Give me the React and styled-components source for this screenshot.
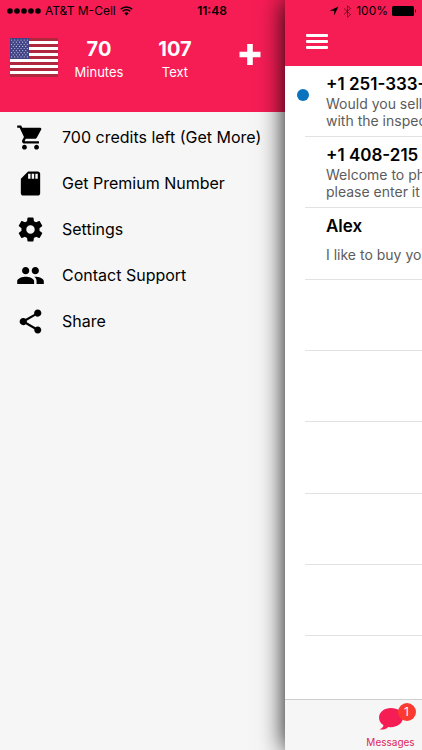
import React from 'react'
import styled, { createGlobalStyle } from 'styled-components'
import { MdShoppingCart, MdSdCard, MdGroup, MdShare } from 'react-icons/md'

const GlobalStyle = createGlobalStyle`
    * {
        box-sizing: border-box;
    }
    body {
        margin: 0;
        font-family: Inter, "Liberation Sans", sans-serif;
        color: #000;
        background-color: #f6f6f6;
    }
    button {
        margin: 0;
        padding: 0;
        border: none;
        background: none;
        font: inherit;
        color: inherit;
        cursor: pointer;
    }
    ul {
        margin: 0;
        padding: 0;
        list-style: none;
    }
`

const Shell = styled.div`
    position: relative;
    display: grid;
    grid-template-columns: minmax(0, 1fr) 137px;
    min-height: 100vh;
    overflow: hidden;
`

/* status bar, lies over both the drawer and the page */
const StatusBar = styled.div`
    position: absolute;
    top: 0;
    left: 0;
    right: 0;
    z-index: 2;
    display: grid;
    grid-template-columns: 1fr auto 1fr;
    align-items: center;
    height: 22px;
    padding: 0 5px 0 7px;
    font-size: 12px;
    line-height: 16px;
    pointer-events: none;
`

const StatusGroup = styled.div`
    display: flex;
    align-items: center;
    justify-content: ${({ $end }) => ($end ? 'flex-end' : 'flex-start')};
    gap: 4px;
    white-space: nowrap;
`

const Clock = styled.div`
    font-weight: 600;
`

const Drawer = styled.nav`
    background-color: #f6f6f6;
`

const DrawerHeader = styled.header`
    display: flex;
    align-items: flex-start;
    height: 112px;
    padding: 38px 24px 0 10px;
    background-color: #f61d55;
    color: #fff;
`

const Stats = styled.div`
    display: flex;
    margin: 0 auto 0 3px;
`

const Stat = styled.div`
    width: 76px;
    text-align: center;
`

const StatValue = styled.div`
    font-size: 20px;
    line-height: 22px;
    font-weight: 700;
`

const StatLabel = styled.div`
    margin-top: 4px;
    font-size: 13px;
    line-height: 16px;
`

const AddButton = styled.button`
    display: flex;
    padding-top: 6px;
`

const Menu = styled.ul`
    display: flex;
    flex-direction: column;
    padding-top: 2px;
`

const MenuButton = styled.button`
    display: flex;
    align-items: center;
    gap: 17px;
    width: 100%;
    height: 46px;
    padding-left: 16px;
    font-size: 16px;
    line-height: 20px;
    text-align: left;
    white-space: nowrap;
    svg {
        flex: none;
        width: 29px;
        height: 29px;
    }
`

const Page = styled.main`
    position: relative;
    z-index: 1;
    display: flex;
    flex-direction: column;
    width: 100vw;
    background-color: #fff;
    box-shadow: 0 0 24px rgba(0, 0, 0, 0.95);
`

const PageHeader = styled.header`
    height: 66px;
    padding: 33px 0 0 21px;
    background-color: #f61d55;
`

const MenuToggle = styled.button`
    display: flex;
`

const MessageList = styled.ul`
    display: grid;
    flex: 1;
    grid-auto-rows: 71px 71px 72px;
`

const MessageRow = styled.li`
    display: grid;
    grid-template-columns: 20px 1fr;
`

const Unread = styled.span`
    width: 12px;
    height: 12px;
    margin: 23px 0 0 12px;
    border-radius: 50%;
    background-color: #0a73bd;
`

const MessageBody = styled.div`
    grid-column: 2;
    padding: 8px 0 0 21px;
    border-bottom: 1px solid #e2e2e2;
    white-space: nowrap;
`

const Sender = styled.div`
    font-size: 17px;
    line-height: 21px;
    font-weight: 600;
`

const Preview = styled.div`
    padding-top: ${({ $single }) => ($single ? '9px' : '0')};
    font-size: 14px;
    line-height: 17px;
    color: #5c5c5c;
`

const TabBar = styled.footer`
    display: flex;
    height: 51px;
    border-top: 1px solid #cfcfcf;
    background-color: #f6f6f6;
`

const Tab = styled.a`
    display: flex;
    flex-direction: column;
    align-items: center;
    width: 50%;
    padding-top: 7px;
    font-size: 10px;
    line-height: 14px;
    color: #e0265a;
    text-decoration: none;
`

const TabIcon = styled.span`
    position: relative;
    display: flex;
    height: 28px;
`

const Badge = styled.span`
    position: absolute;
    top: -4px;
    right: -12px;
    width: 18px;
    height: 18px;
    border-radius: 50%;
    background-color: #fb3b30;
    color: #fff;
    font-size: 12px;
    line-height: 18px;
    text-align: center;
`

const Gear = () => (
    <svg viewBox="0 0 24 24">
        <path d="M19.43 12.98c.04-.32.07-.64.07-.98s-.03-.66-.07-.98l2.11-1.65c.19-.15.24-.42.12-.64l-2-3.46c-.12-.22-.39-.3-.61-.22l-2.49 1c-.52-.4-1.08-.73-1.69-.98l-.38-2.65C14.46 2.18 14.25 2 14 2h-4c-.25 0-.46.18-.49.42l-.38 2.65c-.61.25-1.17.59-1.69.98l-2.49-1c-.23-.09-.49 0-.61.22l-2 3.46c-.13.22-.07.49.12.64l2.11 1.65c-.04.32-.07.65-.07.98s.03.66.07.98l-2.11 1.65c-.19.15-.24.42-.12.64l2 3.46c.12.22.39.3.61.22l2.49-1c.52.4 1.08.73 1.69.98l.38 2.65c.03.24.24.42.49.42h4c.25 0 .46-.18.49-.42l.38-2.65c.61-.25 1.17-.59 1.69-.98l2.49 1c.23.09.49 0 .61-.22l2-3.46c.12-.22.07-.49-.12-.64l-2.11-1.65zM12 15.5c-1.93 0-3.5-1.57-3.5-3.5s1.57-3.5 3.5-3.5 3.5 1.57 3.5 3.5-1.57 3.5-3.5 3.5z" />
    </svg>
)

const menuItems = [
    { icon: MdShoppingCart, label: '700 credits left (Get More)' },
    { icon: MdSdCard, label: 'Get Premium Number' },
    { icon: Gear, label: 'Settings' },
    { icon: MdGroup, label: 'Contact Support' },
    { icon: MdShare, label: 'Share' },
]

const messages = [
    { sender: '+1 251-333-', lines: ['Would you sell', 'with the inspec'], unread: true },
    { sender: '+1 408-215', lines: ['Welcome to ph', 'please enter it'] },
    { sender: 'Alex', lines: ['I like to buy you'] },
    {}, {}, {}, {}, {},
]

const SignalDots = () => (
    <svg width="34" height="6" viewBox="0 0 34 6">
        {[3, 10, 17, 24, 31].map((x) => (
            <circle key={x} cx={x} cy="3" r="2.8" />
        ))}
    </svg>
)

const Wifi = () => (
    <svg width="13" height="10" viewBox="0 0 13 10" fill="none" stroke="#000" strokeWidth="1.5">
        <path d="M0.7 3.3a8.3 8.3 0 0 1 11.6 0" />
        <path d="M2.7 5.4a5.4 5.4 0 0 1 7.6 0" />
        <path d="M6.5 9.6L4.3 7.3a3.2 3.2 0 0 1 4.4 0z" fill="#000" stroke="none" />
    </svg>
)

const LocationArrow = () => (
    <svg width="10" height="10" viewBox="0 0 10 10">
        <path d="M9.5 0.5L5.2 9.5V4.8H0.5z" />
    </svg>
)

const Bluetooth = () => (
    <svg width="9" height="13" viewBox="0 0 9 13" fill="none" stroke="#000" strokeOpacity="0.5">
        <path d="M1 3.5l6.5 6L4.5 12.2V0.8L7.5 3.5L1 9.5" />
    </svg>
)

const Battery = () => (
    <svg width="25" height="10" viewBox="0 0 25 10">
        <rect width="22" height="10" rx="1.5" />
        <path d="M23 3.2a2 2 0 0 1 0 3.6z" />
    </svg>
)

const Flag = () => (
    <svg width="48" height="39" viewBox="0 0 48 39">
        <rect width="48" height="39" fill="#fff" />
        {[0, 2, 4, 6, 8, 10, 12].map((i) => (
            <rect key={i} y={i * 3} width="48" height="3" fill="#b0283e" />
        ))}
        <rect width="19" height="21" fill="#3f4284" />
        {[0, 1, 2, 3, 4, 5, 6, 7, 8].map((row) =>
            (row % 2 ? [0, 1, 2, 3, 4] : [0, 1, 2, 3, 4, 5]).map((col) => (
                <circle
                    key={`${row}-${col}`}
                    cx={1.6 + col * 3.15 + (row % 2 ? 1.6 : 0)}
                    cy={2.1 + row * 2.1}
                    r="0.6"
                    fill="#c9cbe4"
                />
            ))
        )}
    </svg>
)

const App = () => {
    return (
        <>
            <GlobalStyle />
            <Shell>
                <StatusBar>
                    <StatusGroup>
                        <SignalDots />
                        <span>AT&amp;T M-Cell</span>
                        <Wifi />
                    </StatusGroup>
                    <Clock>11:48</Clock>
                    <StatusGroup $end>
                        <LocationArrow />
                        <Bluetooth />
                        <span>100%</span>
                        <Battery />
                    </StatusGroup>
                </StatusBar>

                <Drawer>
                    <DrawerHeader>
                        <Flag />
                        <Stats>
                            <Stat>
                                <StatValue>70</StatValue>
                                <StatLabel>Minutes</StatLabel>
                            </Stat>
                            <Stat>
                                <StatValue>107</StatValue>
                                <StatLabel>Text</StatLabel>
                            </Stat>
                        </Stats>
                        <AddButton aria-label="Add">
                            <svg width="22" height="21" viewBox="0 0 22 21" fill="#fff">
                                <path d="M8.2 0h5.6v7.7h7.7v5.6h-7.7V21H8.2v-7.7H0.5V7.7h7.7z" />
                            </svg>
                        </AddButton>
                    </DrawerHeader>
                    <Menu>
                        {menuItems.map(({ icon: Icon, label }) => (
                            <li key={label}>
                                <MenuButton>
                                    <Icon />
                                    {label}
                                </MenuButton>
                            </li>
                        ))}
                    </Menu>
                </Drawer>

                <Page>
                    <PageHeader>
                        <MenuToggle aria-label="Menu">
                            <svg width="22" height="17" viewBox="0 0 22 17" fill="#fff">
                                <rect y="1" width="22" height="3" rx="1" />
                                <rect y="7" width="22" height="3" rx="1" />
                                <rect y="13" width="22" height="3" rx="1" />
                            </svg>
                        </MenuToggle>
                    </PageHeader>
                    <MessageList>
                        {messages.map(({ sender, lines = [], unread }, index) => (
                            <MessageRow key={index}>
                                {unread && <Unread />}
                                <MessageBody>
                                    {sender && <Sender>{sender}</Sender>}
                                    <Preview $single={lines.length === 1}>
                                        {lines.map((line) => (
                                            <div key={line}>{line}</div>
                                        ))}
                                    </Preview>
                                </MessageBody>
                            </MessageRow>
                        ))}
                    </MessageList>
                    <TabBar>
                        <Tab href="#messages">
                            <TabIcon>
                                <svg width="26" height="24" viewBox="0 0 26 24" fill="#f61d55">
                                    <path d="M13 1C6.2 1 1 5.2 1 10.6c0 3.2 1.7 6 4.5 7.7C5.3 20 4 21.3 1.6 22.3c3.4.6 6.4-.2 8.6-2.4.9.2 1.8.3 2.8.3 6.8 0 12-4.2 12-9.6S19.8 1 13 1z" />
                                </svg>
                                <Badge>1</Badge>
                            </TabIcon>
                            Messages
                        </Tab>
                    </TabBar>
                </Page>
            </Shell>
        </>
    )
}

export default App
